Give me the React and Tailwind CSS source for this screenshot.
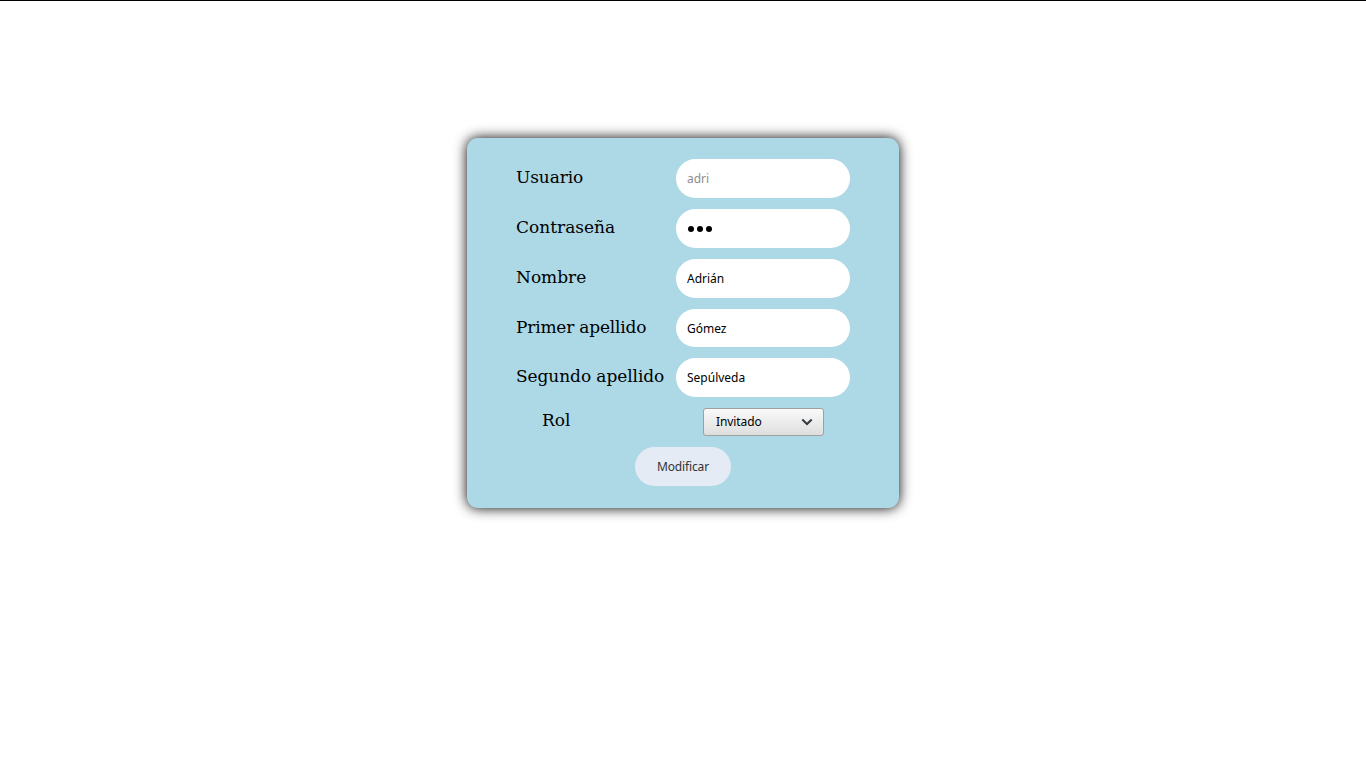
const fields = [
  { label: "Usuario", value: "adri", type: "text", disabled: true, row: "h-[39px] tracking-[-0.1px]" },
  { label: "Contraseña", value: "123", type: "password", row: "h-[39px]" },
  { label: "Nombre", value: "Adrián", type: "text", row: "h-[39px]" },
  { label: "Primer apellido", value: "Gómez", type: "text", row: "h-[38px] tracking-[-0.2px]" },
  { label: "Segundo apellido", value: "Sepúlveda", type: "text", row: "h-[39px] tracking-[-0.08px]" },
];

function Field({ label, value, type, disabled, row }) {
  return (
    <div className={`mb-[11px] flex ${row}`}>
      <label className="w-[160px] shrink-0 whitespace-nowrap pt-[6px] text-[17px] leading-6">{label}</label>
      {type === "password" ? (
        <div className="flex h-full w-[174px] items-center gap-[3px] rounded-full bg-white pl-[12px]">
          {value.split("").map((c) => (
            <span key={c} className="size-[6px] rounded-full bg-black" />
          ))}
        </div>
      ) : (
        <input
          className={`h-full w-[174px] rounded-full bg-white px-[11px] font-['Noto_Sans',sans-serif] text-[12px] tracking-normal outline-none ${disabled ? "text-[#8e8e8e]" : "text-black"}`}
          type={type}
          defaultValue={value}
          disabled={disabled}
        />
      )}
    </div>
  );
}

export default function App() {
  return (
    <main className="h-screen overflow-hidden border-t border-black bg-white pt-[137px] font-['DejaVu_Serif',serif] text-black">
      <form className="mx-auto h-[370px] w-[432px] rounded-[11px] bg-[#add8e6] px-[49px] pt-[21px] shadow-[0_0_13px_0_#000000]">
        {fields.map((f) => (
          <Field key={f.label} {...f} />
        ))}
        <div className="mb-[11px] flex h-[28px] pl-[26px]">
          <label className="w-[161px] text-[17px] leading-6">Rol</label>
          <button
            type="button"
            className="flex h-[28px] w-[121px] items-center justify-between rounded-[3px] border border-[#a0a0a0] bg-linear-to-b from-[#fafafa] to-[#dedede] pl-[12px] pr-[10px] font-['Noto_Sans',sans-serif] text-[12px] tracking-[-0.1px]"
          >
            <span>Invitado</span>
            <svg className="mb-px" width="12" height="8" viewBox="0 0 12 8" fill="none" stroke="#353a3e" strokeWidth="2">
              <path d="M1.3 1.5l4.7 4.5 4.7-4.5" />
            </svg>
          </button>
        </div>
        <button
          type="button"
          className="mx-auto block h-[39px] w-[96px] rounded-full bg-[#e4ebf5] pt-[1px] font-['Noto_Sans',sans-serif] text-[12px] tracking-[-0.15px] text-[#333] [font-variant-ligatures:common-ligatures]"
        >
          Modificar
        </button>
      </form>
    </main>
  );
}
